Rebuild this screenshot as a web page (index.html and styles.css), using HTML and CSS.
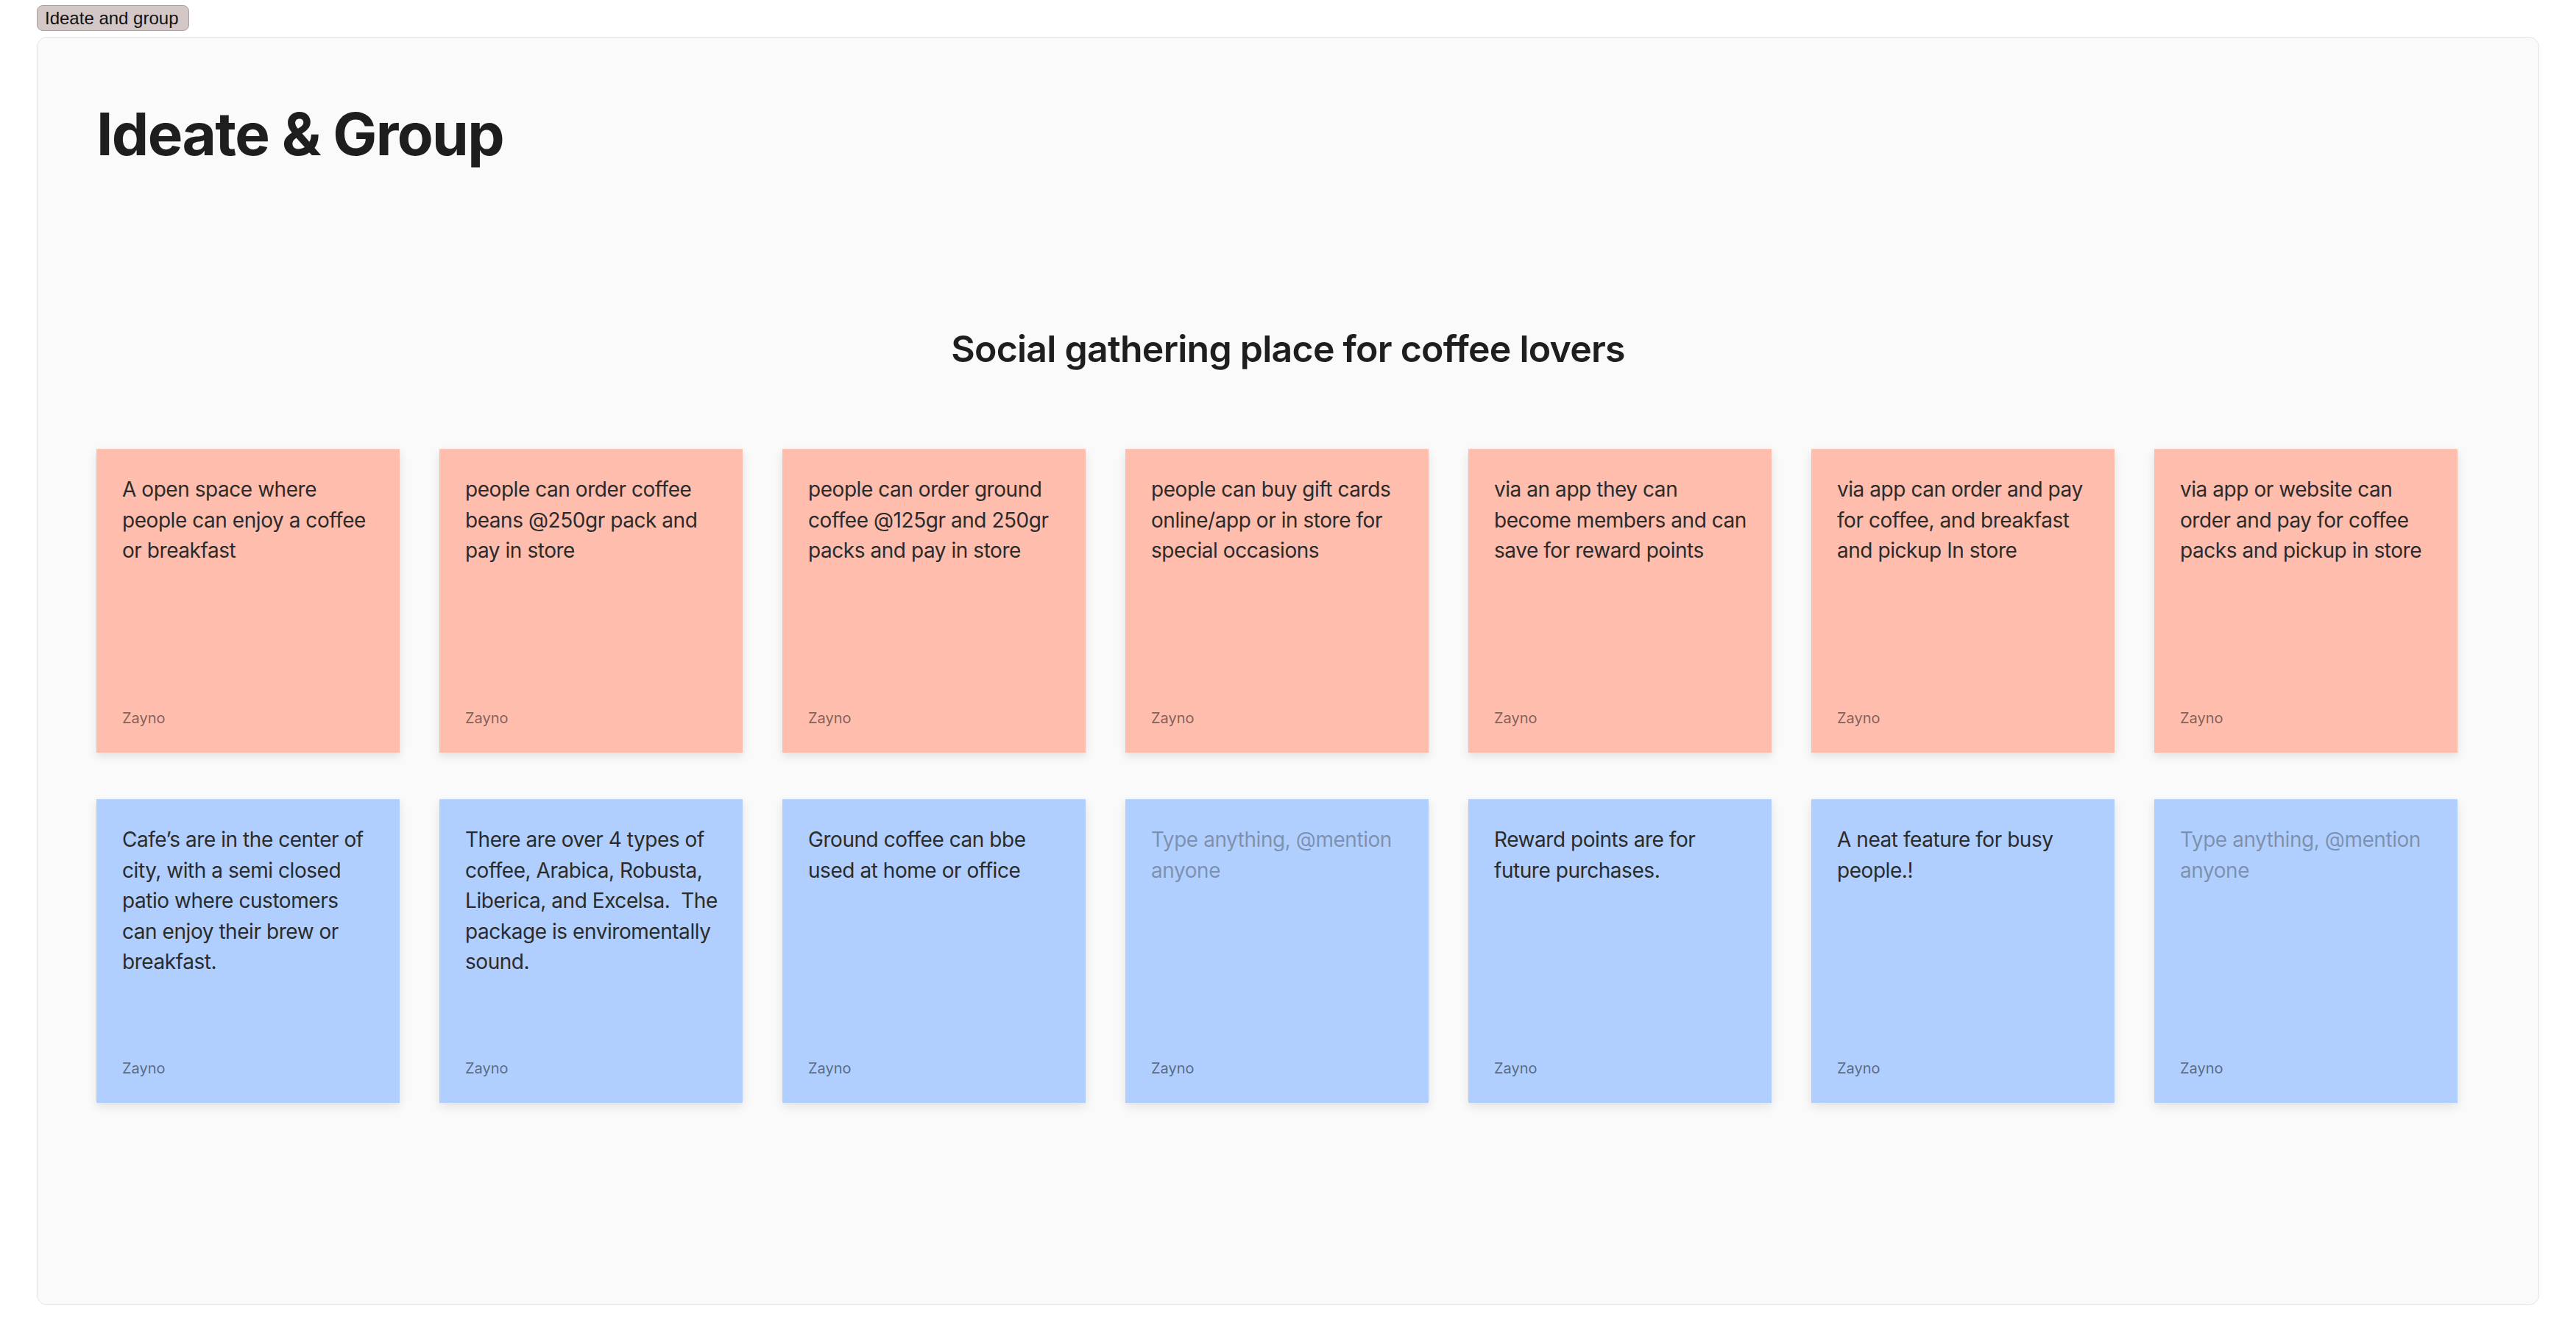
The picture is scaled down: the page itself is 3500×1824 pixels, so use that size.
FILE: index.html
```html
<!DOCTYPE html>
<html lang="en">

<head>
    <meta charset="UTF-8">
    <meta name="viewport" content="width=device-width, initial-scale=1.0">
    <title>Ideate and group</title>
    <link rel="stylesheet" href="styles.css">
</head>

<body>
    <div class="frame-label">Ideate and group</div>

    <section class="frame">
        <h1 class="frame-title">Ideate &amp; Group</h1>
        <h2 class="topic">Social gathering place for coffee lovers</h2>

        <div class="board">
            <div class="sticky pink">
                <p class="note">A open space where people can enjoy a coffee or breakfast</p>
                <span class="author">Zayno</span>
            </div>
            <div class="sticky pink">
                <p class="note">people can order coffee beans @250gr pack and pay in store</p>
                <span class="author">Zayno</span>
            </div>
            <div class="sticky pink">
                <p class="note">people can order ground coffee @125gr and 250gr packs and pay in store</p>
                <span class="author">Zayno</span>
            </div>
            <div class="sticky pink">
                <p class="note">people can buy gift cards online/app or in store for special occasions</p>
                <span class="author">Zayno</span>
            </div>
            <div class="sticky pink">
                <p class="note">via an app they can become members and can save for reward points</p>
                <span class="author">Zayno</span>
            </div>
            <div class="sticky pink">
                <p class="note">via app can order and pay for coffee, and breakfast and pickup In store</p>
                <span class="author">Zayno</span>
            </div>
            <div class="sticky pink">
                <p class="note">via app or website can order and pay for coffee packs and pickup in store</p>
                <span class="author">Zayno</span>
            </div>

            <div class="sticky blue">
                <p class="note">Cafe’s are in the center of city, with a semi closed patio where customers can enjoy their brew or breakfast.</p>
                <span class="author">Zayno</span>
            </div>
            <div class="sticky blue">
                <p class="note">There are over 4 types of coffee, Arabica, Robusta, Liberica, and Excelsa.&nbsp; The package is enviromentally sound.</p>
                <span class="author">Zayno</span>
            </div>
            <div class="sticky blue">
                <p class="note">Ground coffee can bbe used at home or office</p>
                <span class="author">Zayno</span>
            </div>
            <div class="sticky blue">
                <p class="note empty">Type anything, @mention anyone</p>
                <span class="author">Zayno</span>
            </div>
            <div class="sticky blue">
                <p class="note">Reward points are for future purchases.</p>
                <span class="author">Zayno</span>
            </div>
            <div class="sticky blue">
                <p class="note">A neat feature for busy people.!</p>
                <span class="author">Zayno</span>
            </div>
            <div class="sticky blue">
                <p class="note empty">Type anything, @mention anyone</p>
                <span class="author">Zayno</span>
            </div>
        </div>
    </section>
</body>

</html>
```

FILE: styles.css
```css
body {
    margin: 0;
    padding: 7px 50px 50px;
    background-color: #ffffff;
    font-family: Inter, "Noto Sans", sans-serif;
    color: #1e1e1e;
}
.frame-label {
    display: inline-block;
    height: 35px;
    box-sizing: border-box;
    padding: 0 13px 0 10px;
    border: 1px solid #aa9f9f;
    border-radius: 8px;
    background-color: #d3c7c7;
    font-family: "Liberation Sans", Arial, sans-serif;
    font-size: 24px;
    line-height: 33px;
    color: #111;
}
.frame {
    height: 1724px;
    box-sizing: border-box;
    margin-top: 8px;
    padding: 83px 80px 0;
    background-color: #fafafa;
    border: 1px solid #e3e3e3;
    border-radius: 14px;
}
.frame-title {
    margin: 0;
    font-size: 80px;
    font-weight: 700;
    line-height: 96px;
    letter-spacing: -0.02em;
}
.topic {
    margin: 213px 0 0;
    text-align: center;
    font-size: 50px;
    font-weight: 600;
    line-height: 62px;
    letter-spacing: -0.015em;
}
.board {
    display: grid;
    grid-template-columns: repeat(7, 412px);
    grid-auto-rows: 413px;
    column-gap: 54px;
    row-gap: 63px;
    margin-top: 105px;
}
.sticky {
    display: flex;
    flex-direction: column;
    justify-content: space-between;
    box-sizing: border-box;
    padding: 34px 31px 32px 35px;
    box-shadow: 0 5px 12px rgba(0, 0, 0, 0.1);
}
.pink {
    background-color: #ffbdad;
    border-top: 1px solid #ffc8bb;
}
.blue {
    background-color: #b0cffe;
    border-top: 1px solid #bcd6ff;
}
.note {
    margin: 0;
    font-size: 28px;
    line-height: 41.5px;
    letter-spacing: -0.45px;
    color: #2b2b2b;
}
.note.empty {
    color: rgba(40, 40, 40, 0.38);
}
.author {
    font-size: 20px;
    line-height: 30px;
    color: rgba(0, 0, 0, 0.5);
}
```
